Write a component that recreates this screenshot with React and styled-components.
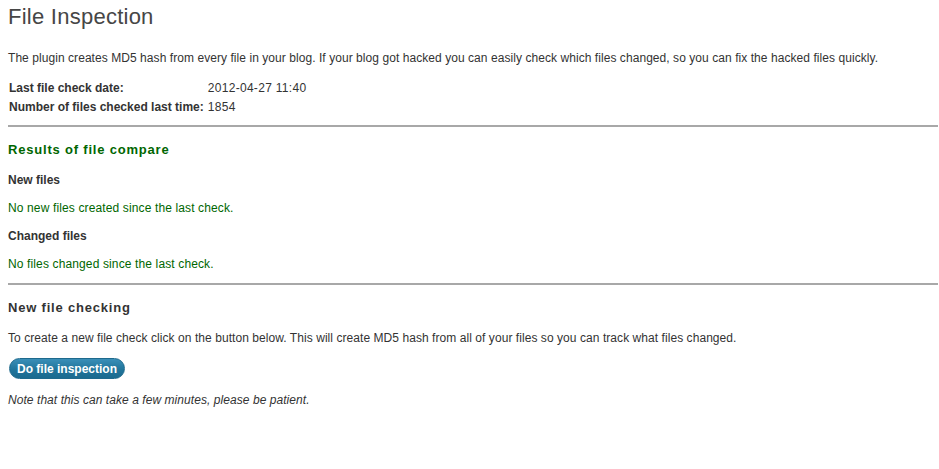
import React from "react";
import styled, { createGlobalStyle } from "styled-components";

const Global = createGlobalStyle`
  html, body { margin: 0; padding: 0; background: #fff; }
  body {
    font-family: "Liberation Sans", Arial, sans-serif;
    font-size: 12px;
    color: #333;
  }
`;

const Wrap = styled.div`
  padding: 0 1px 0 8px;
`;

const Title = styled.h2`
  margin: 0 0 18px;
  padding-top: 2px;
  font-size: 22px;
  line-height: 29px;
  font-weight: normal;
  letter-spacing: 0.25px;
  color: #464646;
`;

const Text = styled.p`
  margin: ${(p) => p.$m || "0"};
  font-size: 12px;
  line-height: 18px;
  letter-spacing: ${(p) => (p.$green ? "0.13px" : "0.06px")};
  color: ${(p) => (p.$green ? "#006600" : "#333")};
  font-style: ${(p) => (p.$italic ? "italic" : "normal")};
`;

const InfoTable = styled.table`
  margin: 11px 0 0 -2px;
  border-spacing: 2px;
  td {
    padding: 1px;
    line-height: 15px;
    font-size: 12px;
    color: #333;
    vertical-align: top;
  }
`;

const Label = styled.td`
  font-weight: bold;
`;

const Value = styled.td`
  letter-spacing: 0.3px;
`;

const Rule = styled.hr`
  margin: ${(p) => p.$m || "0"};
  border: 0;
  border-top: 2px solid #a8a8a8;
  height: 0;
`;

const SectionTitle = styled.h3`
  margin: ${(p) => p.$m || "0"};
  font-size: 13px;
  line-height: 18px;
  font-weight: bold;
  color: ${(p) => (p.$green ? "#006600" : "#333")};
  letter-spacing: 0.8px;
`;

const SubTitle = styled.h4`
  margin: ${(p) => p.$m || "0"};
  font-size: 12px;
  line-height: 18px;
  font-weight: bold;
  color: #333;
`;

const Button = styled.button`
  display: inline-block;
  margin: 11px 0 0 1px;
  padding: 1px 7px;
  height: 21px;
  border: 1px solid #1e6a8d;
  border-radius: 11px;
  background: linear-gradient(to bottom, #3a8fb8 0%, #21759b 55%, #1b6a8f 100%);
  color: #fff;
  font-family: "Liberation Sans", Arial, sans-serif;
  font-size: 12px;
  font-weight: bold;
  line-height: 16px;
  cursor: pointer;
`;

export default function App() {
  return (
    <>
      <Global />
      <Wrap>
        <Title>File Inspection</Title>
        <Text>
          The plugin creates MD5 hash from every file in your blog. If your blog got hacked you can easily check which files changed, so you can fix the hacked files quickly.
        </Text>
        <InfoTable>
          <tbody>
            <tr>
              <Label>Last file check date:</Label>
              <Value>2012-04-27 11:40</Value>
            </tr>
            <tr>
              <Label>Number of files checked last time:</Label>
              <Value>1854</Value>
            </tr>
          </tbody>
        </InfoTable>
        <Rule $m="7px 0 0" />
        <SectionTitle $green $m="14px 0 0">Results of file compare</SectionTitle>
        <SubTitle $m="12px 0 0">New files</SubTitle>
        <Text $green $m="10px 0 0">No new files created since the last check.</Text>
        <SubTitle $m="10px 0 0">Changed files</SubTitle>
        <Text $green $m="10px 0 0">No files changed since the last check.</Text>
        <Rule $m="10px 0 0" />
        <SectionTitle $m="14px 0 0">New file checking</SectionTitle>
        <Text $m="12px 0 0">
          To create a new file check click on the button below. This will create MD5 hash from all of your files so you can track what files changed.
        </Text>
        <Button>Do file inspection</Button>
        <Text $italic $m="12px 0 0">Note that this can take a few minutes, please be patient.</Text>
      </Wrap>
    </>
  );
}
